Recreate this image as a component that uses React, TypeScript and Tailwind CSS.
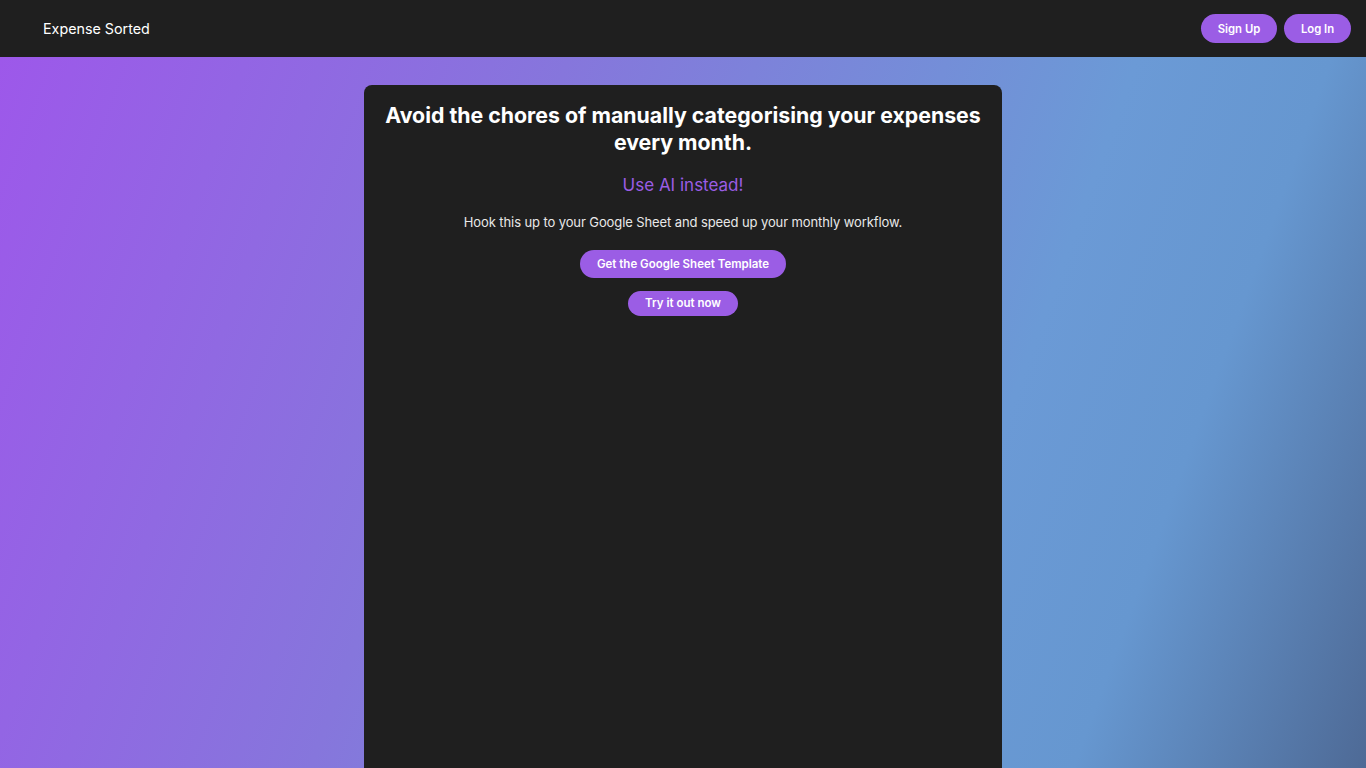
import React from 'react';

const font = { fontFamily: 'Inter, "Noto Sans", sans-serif' };

const Header = () => (
  <header className="h-[57px] bg-[#1f1f1f] flex items-center justify-between pl-[43px] pr-[15px]">
    <span className="text-white text-[14.3px] leading-[20px] mt-[1px]">Expense Sorted</span>
    <div className="flex items-center gap-[7px]">
      <button className="h-[29px] w-[76px] rounded-full bg-[#9b5de5] text-white text-[11.3px] font-semibold pt-[1px]">
        Sign Up
      </button>
      <button className="h-[29px] w-[67px] rounded-full bg-[#9b5de5] text-white text-[11.3px] font-semibold pt-[1px]">
        Log In
      </button>
    </div>
  </header>
);

export default function App() {
  return (
    <div
      className="h-screen overflow-hidden flex flex-col bg-[#1f1f1f]"
      style={font}
    >
      <Header />
      <main className="flex-1 flex justify-center pt-[28px] bg-[linear-gradient(110deg,#9d58ea_0%,#8676dc_35%,#6b9ad6_70%,#6697d0_82%,#4e6a96_100%)]">
        <section className="w-[638px] rounded-t-lg bg-[#1f1f1f] flex flex-col items-center pt-[17px] px-[10px] text-center">
          <h1 className="text-white text-[21.3px] font-bold leading-[27px]">
            Avoid the chores of manually categorising your expenses every month.
          </h1>
          <p className="mt-[15px] text-[#9b5de5] text-[17px] leading-[28px]">Use AI instead!</p>
          <p className="mt-[13px] text-[#e8e8e8] text-[13px] leading-[20px] tracking-[-0.1px]">
            Hook this up to your Google Sheet and speed up your monthly workflow.
          </p>
          <button className="mt-[18px] h-[28px] px-[17px] pt-[1px] rounded-full bg-[#9b5de5] text-white text-[11.5px] font-semibold">
            Get the Google Sheet Template
          </button>
          <button className="mt-[13px] h-[25px] px-[17px] pt-[1px] rounded-full bg-[#9b5de5] text-white text-[11.5px] font-semibold">
            Try it out now
          </button>
        </section>
      </main>
    </div>
  );
}
